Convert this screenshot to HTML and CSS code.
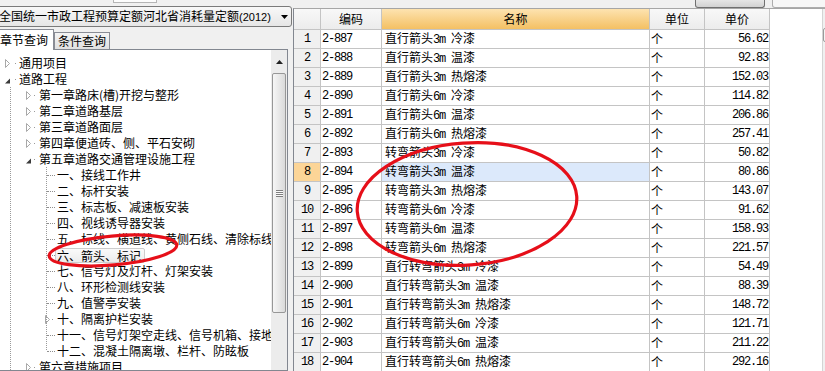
FILE: index.html
```html
<!DOCTYPE html>
<html lang="zh-CN">
<head>
<meta charset="utf-8">
<title>定额查询</title>
<link rel="stylesheet" href="styles.css">
</head>
<body>
<div class="left">
  <div class="lstrip"><div class="ghost"></div></div>
  <div class="combo">
    <span class="combo-text">全国统一市政工程预算定额河北省消耗量定额<span class="yr">(2012)</span></span>
    <svg class="drop" width="7" height="4" viewBox="0 0 7 4"><path d="M0 0H7L3.5 4Z" fill="#000"/></svg>
  </div>
  <div class="tabs">
    <div class="tab active">章节查询</div>
    <div class="tab">条件查询</div>
  </div>
  <div class="treebox">
    <div class="tree">
      <div class="node l0"><svg class="tri" width="5" height="9" viewBox="0 0 5 9"><path d="M0.5 0.5L4.5 4.5L0.5 8.5Z" fill="none" stroke="#a8a8a8"/></svg><i class="dot"></i><span>通用项目</span></div>
      <div class="node l0"><svg class="tri" width="5" height="9" viewBox="0 0 5 9"><path d="M5 3.5V8.5H0Z" fill="#3a3a3a"/></svg><i class="dot"></i><span>道路工程</span></div>
      <div class="kids0">
        <div class="node l1"><svg class="tri" width="5" height="9" viewBox="0 0 5 9"><path d="M0.5 0.5L4.5 4.5L0.5 8.5Z" fill="none" stroke="#a8a8a8"/></svg><i class="dot"></i><span>第一章路床(槽)开挖与整形</span></div>
        <div class="node l1"><svg class="tri" width="5" height="9" viewBox="0 0 5 9"><path d="M0.5 0.5L4.5 4.5L0.5 8.5Z" fill="none" stroke="#a8a8a8"/></svg><i class="dot"></i><span>第二章道路基层</span></div>
        <div class="node l1"><svg class="tri" width="5" height="9" viewBox="0 0 5 9"><path d="M0.5 0.5L4.5 4.5L0.5 8.5Z" fill="none" stroke="#a8a8a8"/></svg><i class="dot"></i><span>第三章道路面层</span></div>
        <div class="node l1"><svg class="tri" width="5" height="9" viewBox="0 0 5 9"><path d="M0.5 0.5L4.5 4.5L0.5 8.5Z" fill="none" stroke="#a8a8a8"/></svg><i class="dot"></i><span>第四章便道砖、侧、平石安砌</span></div>
        <div class="node l1"><svg class="tri" width="5" height="9" viewBox="0 0 5 9"><path d="M5 3.5V8.5H0Z" fill="#3a3a3a"/></svg><i class="dot"></i><span>第五章道路交通管理设施工程</span></div>
        <div class="kids1">
          <div class="node l2"><i class="conn"></i><span>一、接线工作井</span></div>
          <div class="node l2"><i class="conn"></i><span>二、标杆安装</span></div>
          <div class="node l2"><i class="conn"></i><span>三、标志板、减速板安装</span></div>
          <div class="node l2"><i class="conn"></i><span>四、视线诱导器安装</span></div>
          <div class="node l2"><i class="conn"></i><span>五、标线、横道线、黄侧石线、清除标线</span></div>
          <div class="node l2"><i class="conn"></i><span class="sel">六、箭头、标记</span></div>
          <div class="node l2"><i class="conn"></i><span>七、信号灯及灯杆、灯架安装</span></div>
          <div class="node l2"><i class="conn"></i><span>八、环形检测线安装</span></div>
          <div class="node l2"><i class="conn"></i><span>九、值警亭安装</span></div>
          <div class="node l2x"><svg class="tri" width="5" height="9" viewBox="0 0 5 9"><path d="M0.5 0.5L4.5 4.5L0.5 8.5Z" fill="none" stroke="#a8a8a8"/></svg><i class="dot"></i><span>十、隔离护栏安装</span></div>
          <div class="node l2"><i class="conn"></i><span>十一、信号灯架空走线、信号机箱、接地线</span></div>
          <div class="node l2"><i class="conn"></i><span>十二、混凝土隔离墩、栏杆、防眩板</span></div>
        </div>
        <div class="node l1"><svg class="tri" width="5" height="9" viewBox="0 0 5 9"><path d="M0.5 0.5L4.5 4.5L0.5 8.5Z" fill="none" stroke="#a8a8a8"/></svg><i class="dot"></i><span>第六章措施项目</span></div>
      </div>
    </div>
    <div class="vscroll">
      <div class="vs-up"><svg width="7" height="4" viewBox="0 0 7 4"><path d="M0 4H7L3.5 0Z" fill="#222"/></svg></div>
      <div class="thumb"><div class="grip"></div></div>
    </div>
  </div>
</div>

<div class="right">
  <div class="rstrip"><div class="btn b1"></div><div class="btn b2"></div></div>
  <div class="gridwrap">
    <table class="grid">
      <thead>
        <tr><th class="c0"></th><th class="c1">编码</th><th class="c2 name">名称</th><th class="c3">单位</th><th class="c4">单价</th></tr>
      </thead>
      <tbody>
        <tr><td class="rn">1</td><td class="code">2-887</td><td class="nm">直行箭头<span class="n">3m </span>冷漆</td><td class="un">个</td><td class="pr">56.62</td></tr>
        <tr><td class="rn">2</td><td class="code">2-888</td><td class="nm">直行箭头<span class="n">3m </span>温漆</td><td class="un">个</td><td class="pr">92.83</td></tr>
        <tr><td class="rn">3</td><td class="code">2-889</td><td class="nm">直行箭头<span class="n">3m </span>热熔漆</td><td class="un">个</td><td class="pr">152.03</td></tr>
        <tr><td class="rn">4</td><td class="code">2-890</td><td class="nm">直行箭头<span class="n">6m </span>冷漆</td><td class="un">个</td><td class="pr">114.82</td></tr>
        <tr><td class="rn">5</td><td class="code">2-891</td><td class="nm">直行箭头<span class="n">6m </span>温漆</td><td class="un">个</td><td class="pr">206.86</td></tr>
        <tr><td class="rn">6</td><td class="code">2-892</td><td class="nm">直行箭头<span class="n">6m </span>热熔漆</td><td class="un">个</td><td class="pr">257.41</td></tr>
        <tr><td class="rn">7</td><td class="code">2-893</td><td class="nm">转弯箭头<span class="n">3m </span>冷漆</td><td class="un">个</td><td class="pr">50.82</td></tr>
        <tr class="cur"><td class="rn">8</td><td class="code">2-894</td><td class="nm">转弯箭头<span class="n">3m </span>温漆</td><td class="un">个</td><td class="pr">80.86</td></tr>
        <tr><td class="rn">9</td><td class="code">2-895</td><td class="nm">转弯箭头<span class="n">3m </span>热熔漆</td><td class="un">个</td><td class="pr">143.07</td></tr>
        <tr><td class="rn">10</td><td class="code">2-896</td><td class="nm">转弯箭头<span class="n">6m </span>冷漆</td><td class="un">个</td><td class="pr">91.62</td></tr>
        <tr><td class="rn">11</td><td class="code">2-897</td><td class="nm">转弯箭头<span class="n">6m </span>温漆</td><td class="un">个</td><td class="pr">158.93</td></tr>
        <tr><td class="rn">12</td><td class="code">2-898</td><td class="nm">转弯箭头<span class="n">6m </span>热熔漆</td><td class="un">个</td><td class="pr">221.57</td></tr>
        <tr><td class="rn">13</td><td class="code">2-899</td><td class="nm">直行转弯箭头<span class="n">3m </span>冷漆</td><td class="un">个</td><td class="pr">54.49</td></tr>
        <tr><td class="rn">14</td><td class="code">2-900</td><td class="nm">直行转弯箭头<span class="n">3m </span>温漆</td><td class="un">个</td><td class="pr">88.39</td></tr>
        <tr><td class="rn">15</td><td class="code">2-901</td><td class="nm">直行转弯箭头<span class="n">3m </span>热熔漆</td><td class="un">个</td><td class="pr">148.72</td></tr>
        <tr><td class="rn">16</td><td class="code">2-902</td><td class="nm">直行转弯箭头<span class="n">6m </span>冷漆</td><td class="un">个</td><td class="pr">121.71</td></tr>
        <tr><td class="rn">17</td><td class="code">2-903</td><td class="nm">直行转弯箭头<span class="n">6m </span>温漆</td><td class="un">个</td><td class="pr">211.22</td></tr>
        <tr><td class="rn">18</td><td class="code">2-904</td><td class="nm">直行转弯箭头<span class="n">6m </span>热熔漆</td><td class="un">个</td><td class="pr">292.16</td></tr>
      </tbody>
    </table>
    <div class="fill"></div>
    <div class="gscroll"><div class="gs-btn"></div></div>
  </div>
</div>

<svg class="marks" width="825" height="371" viewBox="0 0 825 371">
  <ellipse cx="113" cy="250.5" rx="64" ry="14.5" transform="rotate(-5 113 250.5)" fill="none" stroke="#e60f19" stroke-width="3.2"/>
  <ellipse cx="467" cy="204" rx="110" ry="61" transform="rotate(-4 467 204)" fill="none" stroke="#e60f19" stroke-width="3.2"/>
</svg>
</body>
</html>
```

FILE: styles.css
```css
* { box-sizing: border-box; }
html, body { margin: 0; padding: 0; }
body {
  width: 825px;
  height: 371px;
  overflow: hidden;
  background: #f0f0f0;
  font-family: "Noto Sans CJK SC", "Noto Sans", sans-serif;
  font-size: 12px;
  line-height: 16px;
  color: #000;
  display: flex;
  position: relative;
}

/* ---------- left panel ---------- */
.left {
  flex: none;
  width: 292px;
  margin-left: -4px;
  height: 371px;
  display: flex;
  flex-direction: column;
}
.lstrip { flex: none; height: 6px; }
.ghost {
  margin-left: 117px;
  width: 44px;
  height: 3px;
  background: #fcfcfc;
  border: 1px solid #b5b5b5;
  border-top: none;
}
.combo {
  flex: none;
  height: 21px;
  margin-right: -4px;
  border: 1px solid #7a7a7a;
  border-radius: 3px;
  background: linear-gradient(#f8f8f8, #e6e6e6);
  display: flex;
  align-items: center;
  padding-left: 2px;
}
.combo-text { white-space: nowrap; }
.yr { font-family: "Liberation Sans", sans-serif; font-size: 11px; }
.drop { margin-left: auto; margin-right: 3px; flex: none; }

.tabs {
  flex: none;
  height: 20px;
  margin-top: 2px;
  display: flex;
  align-items: flex-end;
}
.tab {
  flex: none;
  height: 17px;
  width: 56px;
  border: 1px solid #898c95;
  border-bottom: none;
  background: linear-gradient(#f4f4f4, #e0e0e0);
  padding-left: 3px;
  display: flex;
  align-items: center;
  white-space: nowrap;
}
.tab.active {
  height: 21px;
  width: 58px;
  margin-bottom: -1px;
  background: #fff;
  position: relative;
  z-index: 1;
  padding-bottom: 1px;
}

.treebox {
  flex: 1;
  min-height: 0;
  border: 1px solid #828790;
  background: #fff;
  display: flex;
  overflow: hidden;
}
.tree {
  flex: 1;
  min-width: 0;
  padding: 5px 0 0 3px;
  overflow: hidden;
}
.node {
  height: 16px;
  display: flex;
  align-items: center;
  white-space: nowrap;
}
.l0 { padding-left: 5px; }
.l1 { padding-left: 26px; }
.l2 { padding-left: 47px; }
.l2x { padding-left: 45px; }
.tri { flex: none; display: block; }
.dot { flex: none; width: 1px; height: 1px; background: #9a9a9a; }
.l0 .dot { margin-left: 5px; margin-right: 3px; }
.l1 .dot { margin-left: 3px; margin-right: 4px; }
.l2x .dot { margin-left: 2px; margin-right: 4px; }
.conn {
  flex: none;
  width: 8px;
  height: 0;
  border-top: 1px dotted #8f8f8f;
  margin-right: 2px;
}
.kids0 {
  background: repeating-linear-gradient(to bottom, #9a9a9a 0 1px, transparent 1px 2px) 10px 0 / 1px 100% no-repeat;
}
.kids1 {
  background: repeating-linear-gradient(to bottom, #9a9a9a 0 1px, transparent 1px 2px) 46px 0 / 1px calc(100% - 8px) no-repeat;
}
.sel {
  height: 15px;
  line-height: 13px;
  margin-left: -2px;
  padding: 0 3px 0 1px;
  border: 1px solid #cdcdcd;
  border-radius: 2px;
  background: linear-gradient(#fafafa, #ececec);
}

.vscroll {
  flex: none;
  width: 16px;
  background: #ececec;
  display: flex;
  flex-direction: column;
  align-items: center;
}
.vs-up {
  flex: none;
  height: 23px;
  padding-top: 10px;
}
.vs-up svg { display: block; }
.thumb {
  flex: none;
  width: 14px;
  height: 240px;
  border: 1px solid #979797;
  border-radius: 2px;
  background: linear-gradient(to right, #f6f6f6, #dadada);
  display: flex;
  align-items: center;
  justify-content: center;
}
.grip {
  width: 7px;
  height: 7px;
  background: repeating-linear-gradient(to bottom, #7f7f7f 0 1px, #fafafa 1px 2px);
}

/* ---------- right panel ---------- */
.right {
  flex: 1;
  min-width: 0;
  margin-left: 5px;
  display: flex;
  flex-direction: column;
  overflow: hidden;
}
.rstrip { flex: none; height: 8px; display: flex; }
.btn {
  flex: none;
  height: 8px;
  border: 1px solid #707070;
  border-top: none;
  border-radius: 0 0 3px 3px;
}
.b1 { margin-left: 402px; width: 70px; background: linear-gradient(#e6e6e6, #d2d2d2); }
.b2 { margin-left: 7px; width: 60px; background: #f7f7f7; border-color: #adadad; }

.gridwrap {
  flex: 1;
  min-height: 0;
  display: flex;
  align-items: flex-start;
  background: #fff;
  border-left: 1px solid #828790;
  border-top: 1px solid #a6a6a6;
  overflow: hidden;
}
.grid {
  flex: none;
  width: 476px;
  border-collapse: separate;
  border-spacing: 0;
  table-layout: fixed;
}
.grid th, .grid td {
  padding: 0;
  border-right: 1px solid #c4c4c4;
  border-bottom: 1px solid #c4c4c4;
  white-space: nowrap;
  overflow: hidden;
  font-weight: normal;
  line-height: 16px;
}
.grid thead tr { height: 21px; }
.grid tbody tr { height: 19px; }
.grid th { background: linear-gradient(#f8f8f8, #ececec); text-align: center; }
.grid th.name { background: linear-gradient(#fde3b0, #f4c063); }
.c0 { width: 27px; }
.c1 { width: 61px; }
.c2 { width: 268px; }
.c3 { width: 55px; }
.c4 { width: 65px; }
td.rn { background: #f0f0f0; text-align: center; }
td.code { padding-left: 1px; }
td.nm { padding-left: 3px; }
td.un { padding-left: 1px; }
td.pr { text-align: right; padding-right: 1px; }
.n, td.rn, td.code, td.pr {
  font-family: "Liberation Mono", monospace;
  font-size: 12px;
  letter-spacing: -1.2px;
}
tr.cur td.rn { background: #fcd597; }
tr.cur td.nm { background: #dce9fb; }

.fill { flex: none; width: 52px; }
.gscroll {
  flex: none;
  width: 17px;
  align-self: stretch;
  background: #f0f0f0;
  border-left: 1px solid #d4d4d4;
}
.gs-btn {
  margin-top: 19px;
  height: 14px;
  border: 1px solid #9a9a9a;
  border-radius: 2px;
  background: #f4f4f4;
}

/* ---------- annotation overlay ---------- */
.marks {
  position: absolute;
  left: 0;
  top: 0;
  pointer-events: none;
}
```
